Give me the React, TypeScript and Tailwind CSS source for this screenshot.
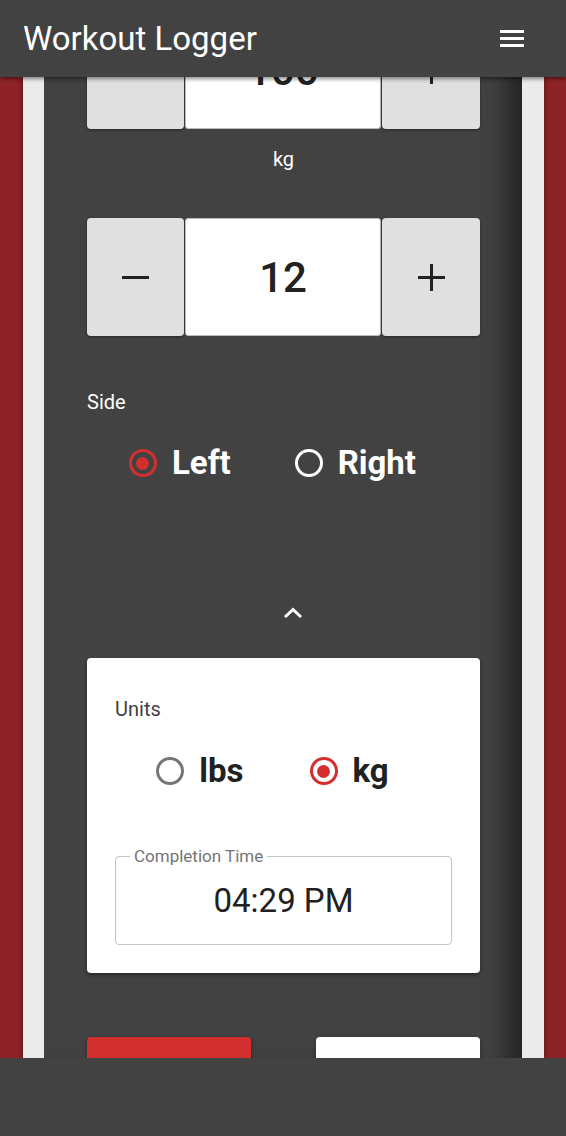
import React from "react";

const font = { fontFamily: "Roboto, 'Liberation Sans', sans-serif" };

const Radio = ({ checked, tone }: { checked: boolean; tone: "dark" | "light" }) => {
    const ring = checked ? "border-[#d32f2f]" : tone === "dark" ? "border-white" : "border-[#757575]";
    return (
        <span className={`flex h-[28px] w-[28px] items-center justify-center rounded-full border-[3px] ${ring}`}>
            {checked && <span className="h-[13px] w-[13px] rounded-full bg-[#d32f2f]" />}
        </span>
    );
};

const Option = ({ label, checked, tone }: { label: string; checked: boolean; tone: "dark" | "light" }) => (
    <label className="flex items-center gap-[15px]">
        <Radio checked={checked} tone={tone} />
        <span className={`text-[33px] font-bold leading-[40px] ${tone === "dark" ? "text-white" : "text-[#212121]"}`}>{label}</span>
    </label>
);

const Stepper = ({ value }: { value: string }) => (
    <div className="flex h-[118px] gap-px">
        <button className="flex w-[97px] items-center justify-center rounded-[4px] bg-[#e0e0e0] shadow-[0_1px_3px_rgba(0,0,0,0.4)]">
            <span className="block h-[3px] w-[27px] bg-[#212121]" />
        </button>
        <div className="flex flex-1 items-center justify-center rounded-[3px] border border-[#bdbdbd] bg-white">
            <span className="text-[42px] font-medium text-[#212121]">{value}</span>
        </div>
        <button className="relative flex w-[98px] items-center justify-center rounded-[4px] bg-[#e0e0e0] shadow-[0_1px_3px_rgba(0,0,0,0.4)]">
            <span className="block h-[3px] w-[27px] bg-[#212121]" />
            <span className="absolute h-[27px] w-[3px] bg-[#212121]" />
        </button>
    </div>
);

export default function App() {
    return (
        <div className="flex h-[1136px] w-[566px] flex-col overflow-hidden bg-[#8e2327]" style={font}>
            {/* Top bar */}
            <header className="relative z-10 flex h-[77px] shrink-0 items-center justify-between bg-[#424242] pl-[23px] pr-[42px] shadow-[0_2px_4px_rgba(0,0,0,0.45)]">
                <h1 className="text-[33px] font-normal text-white">Workout Logger</h1>
                <div className="flex w-[24px] flex-col gap-[4px]">
                    <span className="block h-[3px] bg-white" />
                    <span className="block h-[3px] bg-white" />
                    <span className="block h-[3px] bg-white" />
                </div>
            </header>

            {/* Scroll area */}
            <main className="flex flex-1 overflow-hidden pl-[23px] pr-[22px]">
                <div className="flex flex-1 bg-[#ebebeb] pl-[21px] pr-[22px] shadow-[0_0_6px_rgba(0,0,0,0.5)]">
                    <div className="flex-1 bg-[#424242] pl-[43px] pr-[42px] shadow-[inset_-30px_0_22px_-14px_rgba(0,0,0,0.45)]">
                        <div className="-mt-[66px] flex flex-col">
                            <Stepper value="100" />
                            <p className="mt-[18px] text-center text-[20px] leading-[24px] text-white">kg</p>
                            <div className="mt-[47px]">
                                <Stepper value="12" />
                            </div>

                            <p className="mt-[54px] text-[20px] leading-[24px] text-white">Side</p>
                            <div className="mt-[29px] flex h-[40px] items-center justify-center gap-[64px] pr-[22px]">
                                <Option label="Left" checked tone="dark" />
                                <Option label="Right" checked={false} tone="dark" />
                            </div>

                            <div className="mt-[118px] flex h-[24px] items-center justify-center pl-[18px]">
                                <svg width="20" height="12" viewBox="0 0 20 12" fill="none">
                                    <path d="M2 10 L10 2.5 L18 10" stroke="white" strokeWidth="3" />
                                </svg>
                            </div>

                            {/* Settings card */}
                            <div className="mt-[33px] rounded-[4px] bg-white px-[28px] pb-[28px] pt-[39px] shadow-[0_2px_4px_rgba(0,0,0,0.4)]">
                                <p className="text-[20px] leading-[24px] text-[#424242]">Units</p>
                                <div className="mt-[30px] flex h-[40px] items-center justify-center gap-[66px] pr-[22px]">
                                    <Option label="lbs" checked={false} tone="light" />
                                    <Option label="kg" checked tone="light" />
                                </div>
                                <div className="relative mt-[65px] flex h-[89px] items-center justify-center rounded-[4px] border border-[#c4c4c4]">
                                    <span className="absolute -top-[12px] left-[14px] bg-white px-[4px] text-[17px] leading-[22px] text-[#757575]">Completion Time</span>
                                    <span className="text-[33px] leading-[40px] text-[#212121]">04:29 PM</span>
                                </div>
                            </div>

                            <div className="mt-[64px] flex justify-between">
                                <button className="h-[50px] w-[164px] rounded-[4px] bg-[#d32f2f] shadow-[0_2px_4px_rgba(0,0,0,0.4)]" />
                                <button className="h-[50px] w-[164px] rounded-[4px] bg-white shadow-[0_2px_4px_rgba(0,0,0,0.4)]" />
                            </div>
                        </div>
                    </div>
                </div>
            </main>

            {/* Bottom bar */}
            <footer className="relative z-10 h-[78px] shrink-0 bg-[#424242]" />
        </div>
    );
}
